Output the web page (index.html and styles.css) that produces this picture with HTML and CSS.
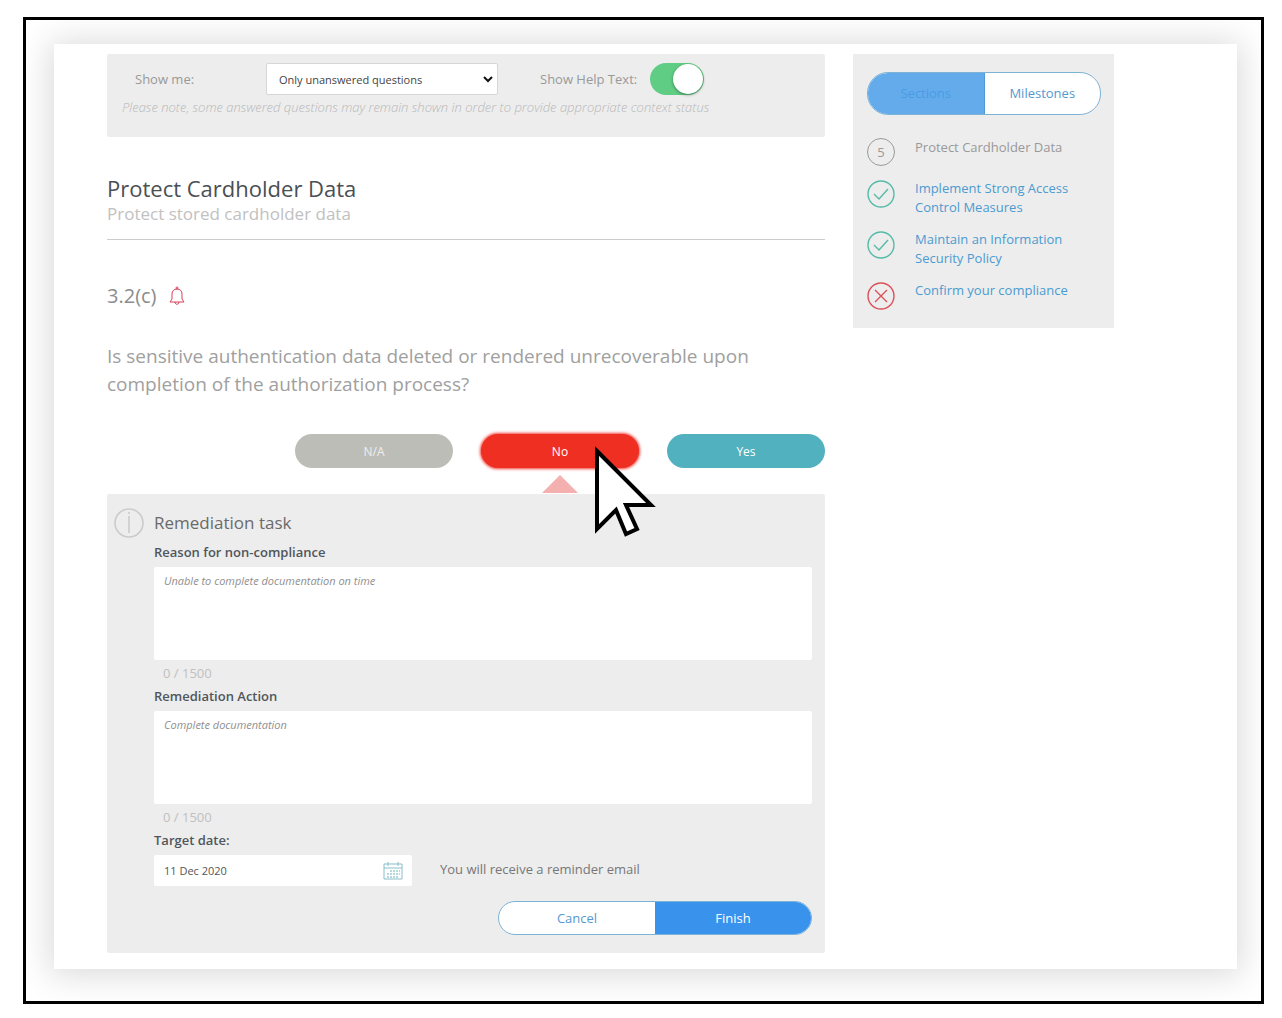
FILE: index.html
```html
<!DOCTYPE html>
<html lang="en">
<head>
  <meta charset="UTF-8">
  <title>Protect Cardholder Data</title>
  <link rel="stylesheet" href="styles.css">
</head>
<body>
<div class="frame">
  <div class="sheet">
    <main>
      <div class="filter">
        <div class="filter-row">
          <label class="filter-label" for="show">Show me:</label>
          <div class="select">
            <select id="show">
              <option>Only unanswered questions</option>
              <option>All questions</option>
            </select>
            <svg width="10" height="7" viewBox="0 0 10 7"><path d="M1 1l4 4 4-4" fill="none" stroke="#111" stroke-width="2"/></svg>
          </div>
          <label class="help-label" for="help">Show Help Text:</label>
          <input class="toggle" id="help" type="checkbox" checked>
        </div>
        <p class="note">Please note, some answered questions may remain shown in order to provide appropriate context status</p>
      </div>

      <header>
        <h1>Protect Cardholder Data</h1>
        <p class="subtitle">Protect stored cardholder data</p>
      </header>

      <h2>3.2(c)
        <svg width="16" height="20" viewBox="0 0 16 20" fill="none" stroke="#d8405a"><circle cx="8" cy="2" r="1"/><path d="M1 16h14l-2-3V8c0-3-2-5-5-5S3 5 3 8v5z"/><path d="M6 16c0 3 4 3 4 0"/></svg>
      </h2>
      <p class="question">Is sensitive authentication data deleted or rendered unrecoverable upon completion of the authorization process?</p>

      <div class="answers">
        <button class="answer na" type="button">N/A</button>
        <div class="picked">
          <button class="answer no" type="button">No</button>
          <svg class="cursor" width="66" height="96" viewBox="0 0 66 96"><path d="M4 7l54 54H33l11 24-11 5-10-24L4 85z" fill="#fff" stroke="#000" stroke-width="4"/></svg>
        </div>
        <button class="answer yes" type="button">Yes</button>
      </div>

      <form class="task">
        <svg class="info" width="30" height="30" viewBox="0 0 30 30" fill="none" stroke="#cbcbcb"><circle cx="15" cy="15" r="14" stroke-width="1.6"/><path d="M15 8v17M15 4v2" stroke-width="1.6"/></svg>
        <div class="task-body">
          <h3>Remediation task</h3>
          <label for="reason">Reason for non-compliance</label>
          <textarea id="reason" placeholder="Unable to complete documentation on time"></textarea>
          <div class="counter">0 / 1500</div>
          <label for="action">Remediation Action</label>
          <textarea id="action" placeholder="Complete documentation"></textarea>
          <div class="counter">0 / 1500</div>
          <label for="date">Target date:</label>
          <div class="date-row">
            <div class="date">
              <input id="date" type="text" value="11 Dec 2020">
              <svg width="20" height="18" viewBox="0 0 20 18" fill="none" stroke="#86bfc9"><path d="M1 2h18v15H1zM1 6h18M5 0v4M15 0v4"/><path d="M7 9h10M4 12h13M4 15h11" stroke-width="2" stroke-dasharray="2 1" opacity=".6"/></svg>
            </div>
            <span>You will receive a reminder email</span>
          </div>
          <div class="pair actions">
            <button type="button">Cancel</button>
            <button class="finish" type="submit">Finish</button>
          </div>
        </div>
      </form>
    </main>

    <aside>
      <div class="pair tabs">
        <button class="active" type="button">Sections</button>
        <button type="button">Milestones</button>
      </div>
      <ul>
        <li><span class="step">5</span><span>Protect Cardholder Data</span></li>
        <li>
          <svg class="done" width="28" height="28" viewBox="0 0 28 28" stroke-width="1.4"><circle cx="14" cy="14" r="13"/><path d="M7 14l5 5 9-10"/></svg>
          <a href="#">Implement Strong Access Control Measures</a>
        </li>
        <li>
          <svg class="done" width="28" height="28" viewBox="0 0 28 28" stroke-width="1.4"><circle cx="14" cy="14" r="13"/><path d="M7 14l5 5 9-10"/></svg>
          <a href="#">Maintain an Information Security Policy</a>
        </li>
        <li>
          <svg class="failed" width="28" height="28" viewBox="0 0 28 28" stroke-width="1.4"><circle cx="14" cy="14" r="13"/><path d="M8 8l12 12M20 8L8 20"/></svg>
          <a href="#">Confirm your compliance</a>
        </li>
      </ul>
    </aside>
  </div>
</div>
</body>
</html>
```
FILE: styles.css
```css
* { box-sizing: border-box; }
body {
  margin: 0;
  padding: 17px 18px 14px 23px;
  background: #fff;
  color: #999;
  font: 13px/19px "Open Sans", "Noto Sans", sans-serif;
}
h1, h2, h3, p, ul { margin: 0; padding: 0; font-weight: 400; }
button, input, select, textarea { font: inherit; margin: 0; }
svg { flex: none; }

.frame {
  border: 3px solid #000;
  padding: 24px 24px 32px 28px;
  overflow: hidden;
}
.sheet {
  display: grid;
  grid-template-columns: minmax(0, 1fr) 261px;
  gap: 28px;
  align-items: start;
  padding: 10px 123px 16px 53px;
  background: #fff;
  box-shadow: 0 2px 32px 4px rgba(0, 0, 0, .15);
}

/* filter bar */
.filter {
  height: 83px;
  padding: 9px 15px;
  background: #ededed;
  border-radius: 2px;
}
.filter-row { display: flex; align-items: center; }
.filter-label { width: 144px; padding-left: 13px; }
.filter-label, .help-label { line-height: 30px; }
.select {
  display: flex;
  align-items: center;
  width: 232px;
  height: 32px;
  padding-right: 4px;
  background: #fff;
  border: 1px solid #d6d6d6;
  border-radius: 2px;
}
.select select {
  flex: 1;
  height: 30px;
  padding: 0 12px;
  border: 0;
  background: none;
  color: #444;
  font-size: 11px;
  appearance: none;
}
.help-label { margin: 0 13px 0 42px; }
.toggle {
  width: 54px;
  height: 32px;
  border-radius: 16px;
  background: #5fcd84;
  appearance: none;
}
.toggle::before {
  content: "";
  display: block;
  width: 30px;
  height: 30px;
  margin: 1px 0 0 23px;
  border-radius: 50%;
  background: #fff;
  box-shadow: 0 1px 3px rgba(0, 0, 0, .4);
}
.note {
  padding-top: 3px;
  color: #b8b8b8;
  font-style: italic;
  font-weight: 300;
}

/* question */
header {
  margin-top: 37px;
  padding-bottom: 14px;
  border-bottom: 1px solid #ccc;
}
h1 { color: #4a4f54; font-size: 22px; line-height: 28px; }
.subtitle { color: #c1c1c1; font-size: 17px; line-height: 23px; }
h2 {
  display: flex;
  align-items: center;
  gap: 12px;
  margin-top: 42px;
  color: #8c8c8c;
  font-size: 20px;
  line-height: 28px;
}
.question {
  margin-top: 32px;
  padding-right: 60px;
  color: #a0a0a0;
  font-size: 19px;
  line-height: 28px;
}
.answers {
  display: flex;
  justify-content: flex-end;
  gap: 28px;
  margin-top: 36px;
}
.answer {
  width: 158px;
  height: 34px;
  border: 0;
  border-radius: 17px;
  color: #fff;
  font-size: 12px;
}
.na { background: #bdbdb8; color: #eee; }
.no { background: #ef2f22; box-shadow: 0 0 3px 1px #f0403a; }
.yes { background: #51b1be; }
.picked { position: relative; }
.picked::after {
  content: "";
  position: absolute;
  top: 41px;
  left: 61px;
  border: 18px solid transparent;
  border-top: 0;
  border-bottom-color: #f4b0ae;
}
.cursor { position: absolute; top: 10px; left: 112px; z-index: 1; }

/* remediation task */
.task {
  display: flex;
  gap: 10px;
  margin-top: 26px;
  padding: 14px 13px 18px 7px;
  background: #ededed;
  border-radius: 2px;
}
.task-body { flex: 1; }
h3 { color: #6a6a6a; font-size: 17px; line-height: 30px; }
.task label {
  display: block;
  color: #50565c;
  font-weight: 600;
  line-height: 29px;
}
textarea, .date {
  display: block;
  border: 0;
  border-radius: 2px;
  background: #fff;
}
textarea {
  width: 100%;
  height: 93px;
  padding: 4px 10px;
  resize: none;
  font-size: 11px;
}
textarea::placeholder { color: #909090; font-style: italic; }
.counter { height: 22px; padding: 4px 9px; color: #c0c0c0; }
.date-row { display: flex; gap: 28px; color: #777; }
.date-row span { line-height: 28px; }
.date {
  display: flex;
  align-items: center;
  width: 258px;
  height: 31px;
  padding: 0 9px 0 10px;
}
.date input {
  flex: 1;
  min-width: 0;
  padding: 0;
  border: 0;
  background: none;
  color: #555;
  font-size: 11px;
}

/* two joined buttons */
.pair {
  display: flex;
  overflow: hidden;
  border: 1px solid #7db3d6;
  border-radius: 21px;
  background: #fff;
}
.pair button {
  flex: 1;
  padding: 0;
  border: 0;
  background: none;
  color: #5598cf;
}
.actions { width: 314px; height: 34px; margin: 15px 0 0 auto; }
.pair .finish { background: #3992ec; color: #fff; }
.tabs { height: 43px; }
.pair .active { background: #64abeb; color: #4a9be6; border-right: 1px solid #4f9bd8; }

/* sections */
aside {
  padding: 18px 13px 18px 14px;
  background: #ededed;
}
ul { display: grid; gap: 13px; margin-top: 23px; list-style: none; }
li { display: flex; gap: 20px; }
li svg { margin-top: 1px; fill: none; }
li a { color: #4b9bd1; text-decoration: none; }
.step {
  flex: none;
  width: 28px;
  height: 28px;
  border: 1px solid #999;
  border-radius: 50%;
  line-height: 27px;
  text-align: center;
}
.done { stroke: #55bba8; }
.failed { stroke: #dc5058; }
```
